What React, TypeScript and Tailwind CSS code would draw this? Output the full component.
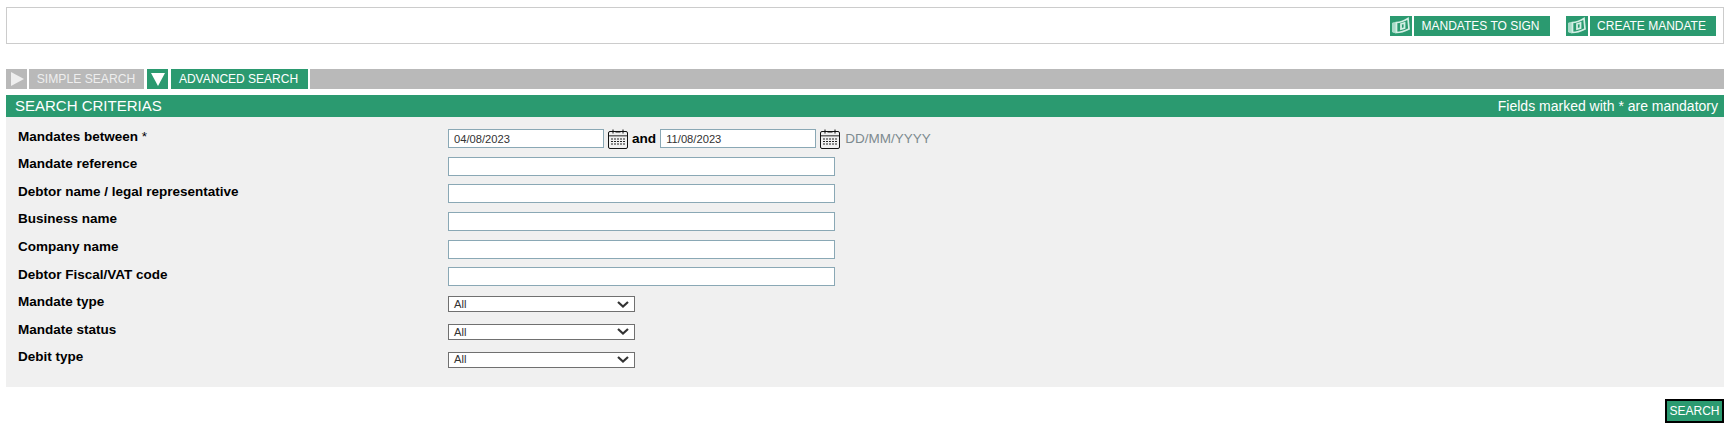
const GREEN = 'bg-[#2b9a70]'

function MoneyIcon() {
  return (
    <span className={`flex h-5 w-[22px] items-center justify-center ${GREEN}`}>
      <svg width="20" height="18" viewBox="0 0 20 18" fill="none" stroke="#d5efe5" strokeWidth="1.7">
        <path d="M1.5 6 L5 5.5 L5 16 L1.5 15 Z" fill="#a9dcc9" stroke="#a9dcc9" strokeWidth="1" />
        <path d="M5.5 5.5 C9 5.5 13 4 17 1.5 L18 12 C14 14 10 15.5 5.5 15.5 Z" />
        <path d="M10 7 L13.5 6 L13.5 11 L10 12 Z" strokeWidth="1.8" />
      </svg>
    </span>
  )
}

function ActionButton({ label, width }: { label: string; width: string }) {
  return (
    <div className="flex gap-0.5">
      <MoneyIcon />
      <a className={`flex h-5 items-center justify-center pr-[3px] text-[12px] text-white ${GREEN} ${width}`}>{label}</a>
    </div>
  )
}

function CalendarIcon() {
  return (
    <svg width="20" height="20" viewBox="0 0 20 20" fill="none" className="shrink-0">
      <rect x="0.5" y="2.5" width="19" height="17" rx="1.5" stroke="#111" />
      <rect x="1" y="6" width="18" height="1.5" fill="#666" />
      <path d="M5 0.5V4.5M15 0.5V4.5M7.5 3H12.5" stroke="#111" />
      <path d="M3 10H17M3 12.5H17M3 15H17" stroke="#222" strokeWidth="1.2" strokeDasharray="2 1" />
    </svg>
  )
}

function FormRow({ label, star, children }: { label: string; star?: boolean; children?: React.ReactNode }) {
  return (
    <div className="flex h-[27.6px] items-center">
      <label className="mb-1 w-[430px] shrink-0 text-[13.5px] font-bold text-black">
        {label}
        {star && <span className="font-normal"> *</span>}
      </label>
      {children}
    </div>
  )
}

function TextBox({ value = '', width = 'w-[387px]' }: { value?: string; width?: string }) {
  return (
    <input
      readOnly
      value={value}
      className={`h-[19px] border border-[#8aa8b5] bg-white px-[5px] text-[11.2px] text-[#333] outline-none ${width}`}
    />
  )
}

function SelectBox() {
  return (
    <div className="flex h-4 w-[187px] items-center justify-between border border-[#707070] bg-white pl-[5px] pr-[5px] text-[11.2px] text-[#333]">
      All
      <svg width="12" height="7" viewBox="0 0 12 7" fill="none">
        <path d="M1 1L6 5.5L11 1" stroke="#333" strokeWidth="2.2" />
      </svg>
    </div>
  )
}

export default function App() {
  return (
    <div className="min-h-[428px] bg-white px-[6px] pt-[7px] font-['Liberation_Sans',Arial,sans-serif]">
      <div className="flex h-[37px] items-center justify-end gap-4 border border-[#cccccc] pr-[7px]">
        <ActionButton label="MANDATES TO SIGN" width="w-[136px]" />
        <ActionButton label="CREATE MANDATE" width="w-[126px]" />
      </div>

      <div className="mt-[25px] flex h-5 gap-0.5 text-[12px] text-white">
        <span className="flex w-[21px] items-center justify-center bg-[#b9b9b9]">
          <svg width="14" height="14" viewBox="0 0 14 14">
            <path d="M1 0L14 7L1 14Z" fill="#eeeeee" />
          </svg>
        </span>
        <a className="flex w-[115px] items-center justify-center bg-[#b9b9b9] pr-px text-[12.15px] text-[#eeeeee]">SIMPLE SEARCH</a>
        <span className={`ml-px flex w-[21px] items-center justify-center ${GREEN}`}>
          <svg width="14" height="13" viewBox="0 0 14 13">
            <path d="M0 0H14L7 13Z" fill="#ffffff" />
          </svg>
        </span>
        <a className={`ml-px flex w-[137px] items-center justify-center pr-[2px] ${GREEN}`}>ADVANCED SEARCH</a>
        <div className="flex-1 bg-[#b9b9b9]" />
      </div>

      <div className={`mt-1.5 flex h-[22px] items-center justify-between pl-[9px] pr-[6px] text-white ${GREEN}`}>
        <h2 className="text-[15px]">SEARCH CRITERIAS</h2>
        <span className="text-[14px]">Fields marked with * are mandatory</span>
      </div>

      <div className="h-[270px] bg-[#f0f0f0] pl-3 pt-2">
        <FormRow label="Mandates between" star>
          <div className="flex items-center gap-1">
            <TextBox value="04/08/2023" width="w-[156px]" />
            <CalendarIcon />
            <span className="text-[13.6px] font-bold text-black">and</span>
            <TextBox value="11/08/2023" width="w-[156px]" />
            <CalendarIcon />
            <span className="ml-px text-[13.5px] text-[#7d8a8f]">DD/MM/YYYY</span>
          </div>
        </FormRow>
        <FormRow label="Mandate reference"><TextBox /></FormRow>
        <FormRow label="Debtor name / legal representative"><TextBox /></FormRow>
        <FormRow label="Business name"><TextBox /></FormRow>
        <FormRow label="Company name"><TextBox /></FormRow>
        <FormRow label="Debtor Fiscal/VAT code"><TextBox /></FormRow>
        <FormRow label="Mandate type"><SelectBox /></FormRow>
        <FormRow label="Mandate status"><SelectBox /></FormRow>
        <FormRow label="Debit type"><SelectBox /></FormRow>
      </div>

      <div className="mt-3 flex justify-end">
        <button className={`h-6 w-[59px] border-2 border-black text-[12px] text-white ${GREEN}`}>SEARCH</button>
      </div>
    </div>
  )
}
